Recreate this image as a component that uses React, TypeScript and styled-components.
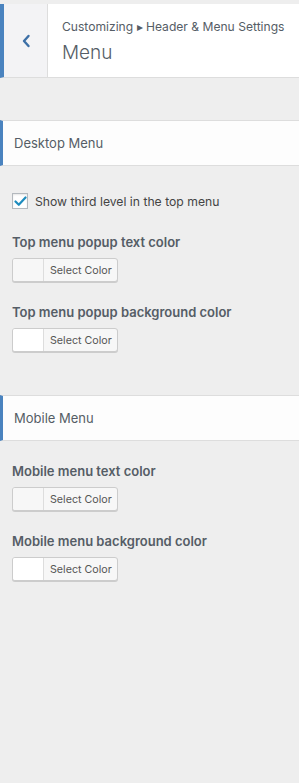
import React from "react";
import styled, { createGlobalStyle } from "styled-components";

const GlobalStyle = createGlobalStyle`
  html, body {
    margin: 0;
    padding: 0;
    background: #eeeeee;
  }
  body {
    font-family: Inter, "Open Sans", "Liberation Sans", sans-serif;
    -webkit-font-smoothing: antialiased;
  }
`;

const Panel = styled.div`
  width: 299px;
  min-height: 783px;
  background: #eeeeee;
  padding-top: 4px;
  box-sizing: border-box;
  color: #555d66;
`;

const Header = styled.div`
  display: flex;
  height: 74px;
  background: #fff;
  border-left: 4px solid #4a83bf;
  border-bottom: 1px solid #dddddd;
  box-sizing: border-box;
`;

const BackButton = styled.button`
  width: 44px;
  flex-shrink: 0;
  background: #f3f3f5;
  border: none;
  border-right: 1px solid #dddddd;
  display: flex;
  align-items: center;
  justify-content: center;
  padding: 0;
  cursor: pointer;
`;

const TitleBlock = styled.div`
  display: flex;
  flex-direction: column;
  justify-content: center;
  padding-left: 14px;
  padding-top: 2px;
  gap: 7px;
`;

const Crumb = styled.div`
  font-size: 12.1px;
  color: #555d66;
  white-space: nowrap;
`;

const Title = styled.div`
  font-size: 19px;
  font-weight: 300;
  color: #555d66;
`;

const SectionHead = styled.div<{ $top: number }>`
  margin-top: ${(p) => p.$top}px;
  height: 46px;
  display: flex;
  align-items: center;
  padding-left: 11px;
  background: #fdfdfd;
  border-top: 1px solid #dddddd;
  border-bottom: 1px solid #dddddd;
  border-left: 3px solid #4a83bf;
  box-sizing: border-box;
  font-size: 13px;
  color: #555d66;
`;

const Controls = styled.div`
  padding: 0 12px;
`;

const CheckRow = styled.label`
  display: flex;
  align-items: center;
  gap: 7px;
  margin-top: 27px;
  height: 16px;
  font-size: 12.2px;
  color: #444;
`;

const Box = styled.span`
  width: 16px;
  height: 16px;
  box-sizing: border-box;
  border: 1px solid #b4b9be;
  background: #fff;
  box-shadow: inset 0 1px 2px rgba(0, 0, 0, 0.1);
  display: flex;
  align-items: center;
  justify-content: center;
`;

const Field = styled.div<{ $top: number }>`
  margin-top: ${(p) => p.$top}px;
  display: flex;
  flex-direction: column;
  align-items: flex-start;
  gap: 7px;
`;

const Label = styled.div`
  font-size: 13px;
  font-weight: 600;
  color: #555d66;
  line-height: 18px;
`;

const ColorButton = styled.div`
  display: flex;
  height: 24px;
  border: 1px solid #cccccc;
  border-radius: 3px;
  box-shadow: 0 1px 0 #cccccc;
  box-sizing: border-box;
  overflow: hidden;
  background: #f7f7f7;
`;

const Swatch = styled.span<{ $color: string }>`
  width: 30px;
  background: ${(p) => p.$color};
  border-right: 1px solid #dddddd;
`;

const SelectText = styled.span`
  display: flex;
  align-items: center;
  padding: 0 5px 0 6px;
  font-size: 10.7px;
  color: #555;
`;

const ColorField = ({ label, top, swatch }: { label: string; top: number; swatch: string }) => (
  <Field $top={top}>
    <Label>{label}</Label>
    <ColorButton>
      <Swatch $color={swatch} />
      <SelectText>Select Color</SelectText>
    </ColorButton>
  </Field>
);

const App = () => {
  return (
    <Panel>
      <GlobalStyle />
      <Header>
        <BackButton aria-label="Back">
          <svg width="10" height="14" viewBox="0 0 10 14">
            <path d="M7.5 2 L3 7 L7.5 12" fill="none" stroke="#3c6fa6" strokeWidth="2.4" strokeLinecap="round" strokeLinejoin="round" />
          </svg>
        </BackButton>
        <TitleBlock>
          <Crumb>Customizing ▸ Header &amp; Menu Settings</Crumb>
          <Title>Menu</Title>
        </TitleBlock>
      </Header>

      <SectionHead $top={42}>Desktop Menu</SectionHead>
      <Controls>
        <CheckRow>
          <Box>
            <svg width="13" height="11" viewBox="0 0 13 11">
              <path d="M1.5 5.5 L4.8 8.8 L11.5 1.5" fill="none" stroke="#1e8cbe" strokeWidth="2.2" strokeLinecap="round" strokeLinejoin="round" />
            </svg>
          </Box>
          Show third level in the top menu
        </CheckRow>
        <ColorField label="Top menu popup text color" top={24} swatch="#f7f7f7" />
        <ColorField label="Top menu popup background color" top={21} swatch="#ffffff" />
      </Controls>

      <SectionHead $top={43}>Mobile Menu</SectionHead>
      <Controls>
        <ColorField label="Mobile menu text color" top={21} swatch="#f7f7f7" />
        <ColorField label="Mobile menu background color" top={21} swatch="#ffffff" />
      </Controls>
    </Panel>
  );
};

export default App;
